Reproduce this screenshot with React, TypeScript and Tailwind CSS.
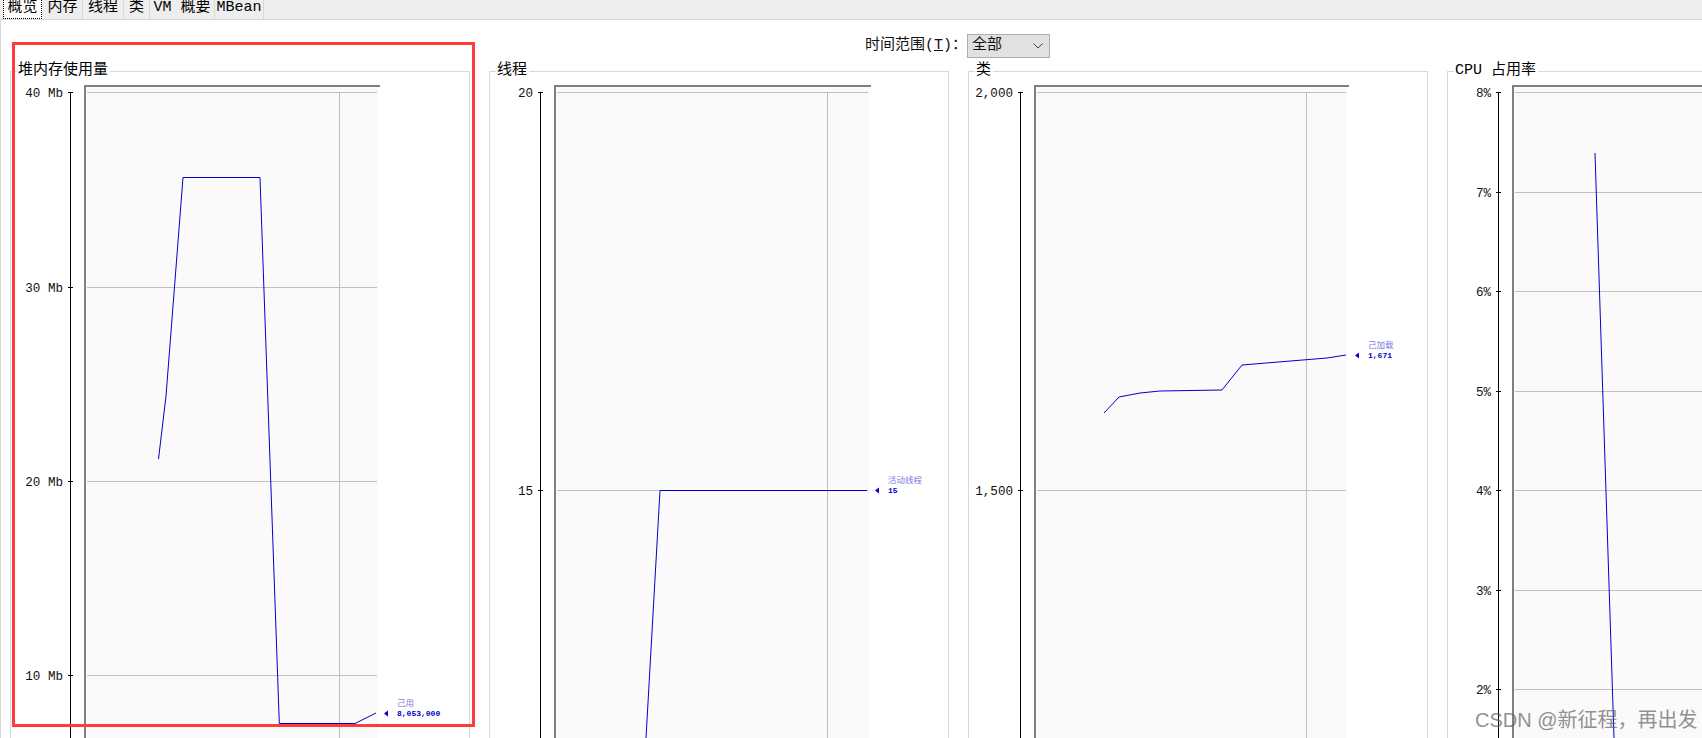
import React from "react";

type Tick = { y: number; label: string };
type ChartProps = {
  title: string;
  left: number;
  axisX: number;
  frameX: number;
  frameEnd: number;
  gridX?: number;
  ticks: Tick[];
  points: string;
  mark?: { x: number; y: number; name: string; value: string };
};

const VIEW_TOP = 81;
const VIEW_H = 660;
const PANEL_W = 458;

function Chart({ title, left, axisX, frameX, frameEnd, gridX, ticks, points, mark }: ChartProps) {
  const plotEnd = frameEnd - 2;
  return (
    <fieldset className="w-[460px] h-[690px] shrink-0 border border-[#d9d9d9]">
      <legend className="ml-[6px] pl-[1px] pr-[2px] text-[15px] leading-[20px] text-black font-['Liberation_Mono','Noto_Sans_CJK_SC',monospace]">
        {title}
      </legend>
      <svg
        width={PANEL_W}
        height={VIEW_H}
        viewBox={`${left + 1} ${VIEW_TOP} ${PANEL_W} ${VIEW_H}`}
        className="block"
      >
        <rect x={frameX} y={86} width={plotEnd - frameX} height={700} fill="#fafafa" />
        <line x1={frameX + 1} y1={85} x2={frameX + 1} y2={760} stroke="#808080" strokeWidth={2} />
        <line x1={frameX} y1={86} x2={frameEnd} y2={86} stroke="#808080" strokeWidth={2} />
        {ticks.map((t) => (
          <line key={t.y} x1={frameX + 3} y1={t.y + 0.5} x2={plotEnd - 1} y2={t.y + 0.5} stroke="#c0c0c0" />
        ))}
        {gridX !== undefined && (
          <line x1={gridX + 0.5} y1={93} x2={gridX + 0.5} y2={760} stroke="#c0c0c0" />
        )}
        <line x1={axisX + 0.5} y1={93} x2={axisX + 0.5} y2={760} stroke="#000" />
        {ticks.map((t) => (
          <g key={t.y}>
            <line x1={axisX - 2} y1={t.y + 0.5} x2={axisX + 3} y2={t.y + 0.5} stroke="#000" />
            <text
              x={axisX - 7}
              y={t.y + 5}
              textAnchor="end"
              fill="#111"
              className="text-[12.6px] font-['Liberation_Mono',monospace]"
            >
              {t.label}
            </text>
          </g>
        ))}
        <polyline points={points} fill="none" stroke="#0000c8" strokeWidth={1} />
        {mark && (
          <g>
            <polygon
              points={`${mark.x},${mark.y + 0.5} ${mark.x + 4},${mark.y - 2.5} ${mark.x + 4},${mark.y + 3.5}`}
              fill="#0000c8"
            />
            <text
              x={mark.x + 13}
              y={mark.y - 7}
              fill="#7a7ae0"
              className="text-[8.5px] font-['Noto_Sans_CJK_SC',sans-serif]"
            >
              {mark.name}
            </text>
            <text
              x={mark.x + 13}
              y={mark.y + 3}
              fill="#0000c8"
              className="text-[8px] font-bold font-['Liberation_Mono',monospace]"
            >
              {mark.value}
            </text>
          </g>
        )}
      </svg>
    </fieldset>
  );
}

const tabs: [string, string][] = [
  ["内存", "w-[40px]"],
  ["线程", "w-[41px]"],
  ["类", "w-[26px]"],
  ["VM 概要", "w-[65px]"],
  ["MBean", "w-[49px]"],
];

export default function App() {
  return (
    <div className="relative w-[1702px] h-[738px] overflow-hidden bg-white text-black font-['Liberation_Mono','Noto_Sans_CJK_SC',monospace]">
      <div className="flex h-[20px] pl-[3px] bg-[#eeeeee] border-b border-[#d9d9d9] text-[15px] leading-[16px]">
        <div className="w-[39px] h-[19px] mr-[1px] flex justify-center bg-white border border-dotted border-black border-t-0 -mt-[0px]">
          概览
        </div>
        {tabs.map(([name, w]) => (
          <div key={name} className={`${w} flex justify-center whitespace-pre border-r border-[#d9d9d9]`}>
            {name}
          </div>
        ))}
      </div>
      <main className="border-l border-[#d9d9d9] h-[718px]">
        <div className="flex justify-end items-center h-[41px] pt-[11px] pr-[652px] text-[15px] text-[#111]">
          <span>
            时间范围(<span className="underline">T</span>)：
          </span>
          <div className="w-[83px] h-[24px] flex items-center justify-between pl-[4px] pr-[6px] bg-[#e1e1e1] border border-[#adadad]">
            <span>全部</span>
            <svg width="10" height="6" viewBox="0 0 10 6" fill="none" stroke="#444">
              <path d="M0.5 0.5 L5 5 L9.5 0.5" />
            </svg>
          </div>
        </div>
        <div className="flex gap-[19px] pl-[9px]">
          <Chart
            title="堆内存使用量"
            left={10}
            axisX={70}
            frameX={84}
            frameEnd={380}
            gridX={339}
            ticks={[
              { y: 92, label: "40 Mb" },
              { y: 287, label: "30 Mb" },
              { y: 481, label: "20 Mb" },
              { y: 675, label: "10 Mb" },
            ]}
            points="158.5,459 166,396 183,177.5 260,177.5 279.3,723.5 355,723.5 376,713"
            mark={{ x: 384, y: 713, name: "己用", value: "8,053,000" }}
          />
          <Chart
            title="线程"
            left={489}
            axisX={540}
            frameX={554}
            frameEnd={871}
            gridX={827}
            ticks={[
              { y: 92, label: "20" },
              { y: 490, label: "15" },
            ]}
            points="646,738 660,490.5 867,490.5"
            mark={{ x: 875, y: 490, name: "活动线程", value: "15" }}
          />
          <Chart
            title="类"
            left={968}
            axisX={1020}
            frameX={1034}
            frameEnd={1349}
            gridX={1306}
            ticks={[
              { y: 92, label: "2,000" },
              { y: 490, label: "1,500" },
            ]}
            points="1104,413 1119,397 1140,393 1160,391 1222,390 1242,365 1327,358 1346,355"
            mark={{ x: 1355, y: 355, name: "己加载", value: "1,671" }}
          />
          <Chart
            title="CPU 占用率"
            left={1447}
            axisX={1498}
            frameX={1512}
            frameEnd={1830}
            ticks={[
              { y: 92, label: "8%" },
              { y: 192, label: "7%" },
              { y: 291, label: "6%" },
              { y: 391, label: "5%" },
              { y: 490, label: "4%" },
              { y: 590, label: "3%" },
              { y: 689, label: "2%" },
            ]}
            points="1595,153 1614,738"
          />
        </div>
      </main>
      <div className="absolute left-[12px] top-[42px] w-[463px] h-[685px] border-[3px] border-[#ff3b3b]" />
      <div className="absolute left-[1475px] top-[706px] text-[20px] leading-[28px] text-[#666] opacity-70 whitespace-pre font-['Liberation_Sans','Noto_Sans_CJK_SC',sans-serif]">
        CSDN @新征程，再出发
      </div>
    </div>
  );
}
